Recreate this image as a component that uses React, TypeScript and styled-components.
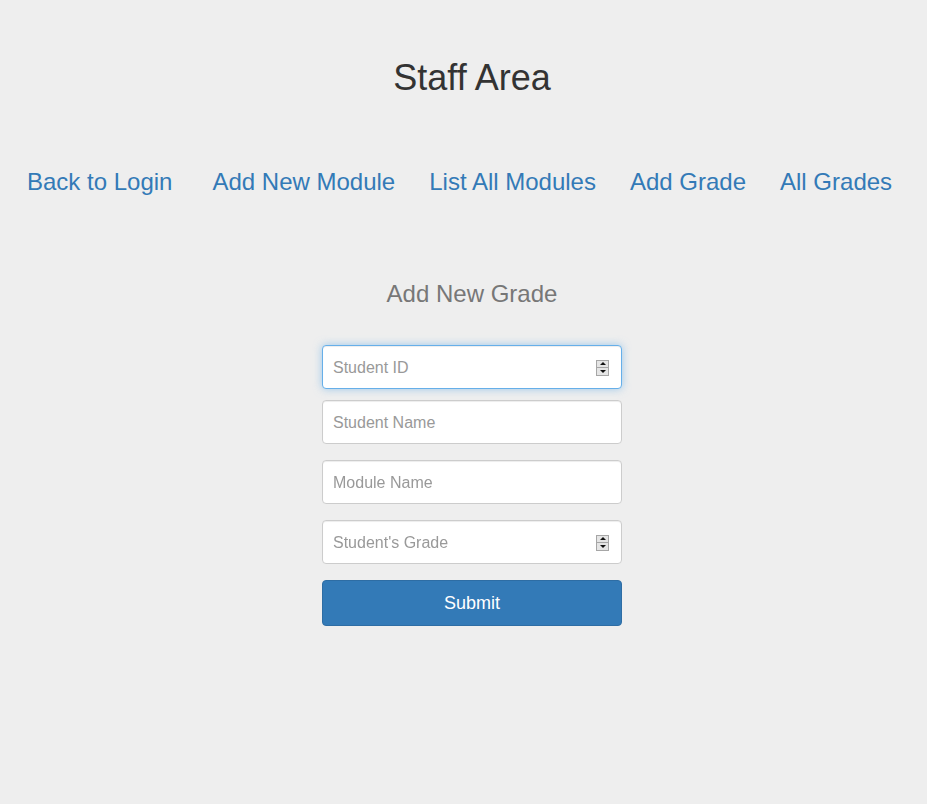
import React from "react";
import styled, { createGlobalStyle } from "styled-components";

const Global = createGlobalStyle`
  html, body {
    margin: 0;
    padding: 0;
    background: #eeeeee;
    font-family: "Liberation Sans", Arial, Helvetica, sans-serif;
    color: #333333;
  }
  * { box-sizing: border-box; }
`;

const Page = styled.div`
  min-height: 804px;
  background: #eeeeee;
  display: flex;
  flex-direction: column;
  align-items: center;
  padding-top: 58px;
  padding-left: 17px;
`;

const Title = styled.h1`
  margin: 0;
  font-size: 36px;
  font-weight: 400;
  line-height: 40px;
  color: #333333;
`;

const Nav = styled.nav`
  align-self: stretch;
  display: flex;
  align-items: center;
  gap: 34px;
  padding-left: 10px;
  margin-top: 70px;
`;

const NavLink = styled.a<{ $extra?: number }>`
  font-size: 24px;
  line-height: 28px;
  color: #337ab7;
  text-decoration: none;
  white-space: nowrap;
  margin-right: ${(p) => p.$extra ?? 0}px;
  cursor: pointer;
`;

const SubTitle = styled.h2`
  margin: 84px 0 0;
  font-size: 24px;
  font-weight: 400;
  line-height: 28px;
  color: #777777;
`;

const Form = styled.form`
  width: 300px;
  margin-top: 37px;
  display: flex;
  flex-direction: column;
`;

const Field = styled.label<{ $gap: number; $focused?: boolean }>`
  display: flex;
  align-items: center;
  height: 44px;
  margin-bottom: ${(p) => p.$gap}px;
  background: #ffffff;
  border: 1px solid ${(p) => (p.$focused ? "#66afe9" : "#cccccc")};
  border-radius: 4px;
  box-shadow: ${(p) =>
    p.$focused
      ? "inset 0 1px 1px rgba(0,0,0,.075), 0 0 8px rgba(102,175,233,.6)"
      : "inset 0 1px 1px rgba(0,0,0,.075)"};
  padding: 1px 12px 0 10px;
`;

const Input = styled.input`
  flex: 1;
  min-width: 0;
  border: none;
  outline: none;
  background: transparent;
  font-family: "Liberation Sans", Arial, Helvetica, sans-serif;
  font-size: 16px;
  color: #555555;
  padding: 0;
  &::placeholder {
    color: #999999;
    opacity: 1;
  }
`;

const Spinner = styled.span`
  display: flex;
  flex-direction: column;
  width: 13px;
  height: 16px;
  border: 1px solid #a6a6a6;
  background: #e5e5e5;
`;

const SpinHalf = styled.span<{ $down?: boolean }>`
  flex: 1;
  display: flex;
  align-items: center;
  justify-content: center;
  border-top: ${(p) => (p.$down ? "1px solid #a6a6a6" : "none")};
  &::after {
    content: "";
    width: 0;
    height: 0;
    border-left: 3px solid transparent;
    border-right: 3px solid transparent;
    ${(p) =>
      p.$down
        ? "border-top: 3px solid #111;"
        : "border-bottom: 3px solid #111;"}
  }
`;

const Button = styled.button`
  height: 46px;
  background: #337ab7;
  border: 1px solid #2e6da4;
  border-radius: 4px;
  color: #ffffff;
  font-family: "Liberation Sans", Arial, Helvetica, sans-serif;
  font-size: 18px;
  cursor: pointer;
`;

const Spin = () => (
  <Spinner>
    <SpinHalf />
    <SpinHalf $down />
  </Spinner>
);

export default function App() {
  return (
    <>
      <Global />
      <Page>
        <Title>Staff Area</Title>
        <Nav>
          <NavLink $extra={6}>Back to Login</NavLink>
          <NavLink>Add New Module</NavLink>
          <NavLink>List All Modules</NavLink>
          <NavLink>Add Grade</NavLink>
          <NavLink>All Grades</NavLink>
        </Nav>
        <SubTitle>Add New Grade</SubTitle>
        <Form onSubmit={(e) => e.preventDefault()}>
          <Field $gap={11} $focused>
            <Input type="text" placeholder="Student ID" autoFocus />
            <Spin />
          </Field>
          <Field $gap={16}>
            <Input type="text" placeholder="Student Name" />
          </Field>
          <Field $gap={16}>
            <Input type="text" placeholder="Module Name" />
          </Field>
          <Field $gap={16}>
            <Input type="text" placeholder="Student's Grade" />
            <Spin />
          </Field>
          <Button type="submit">Submit</Button>
        </Form>
      </Page>
    </>
  );
}
